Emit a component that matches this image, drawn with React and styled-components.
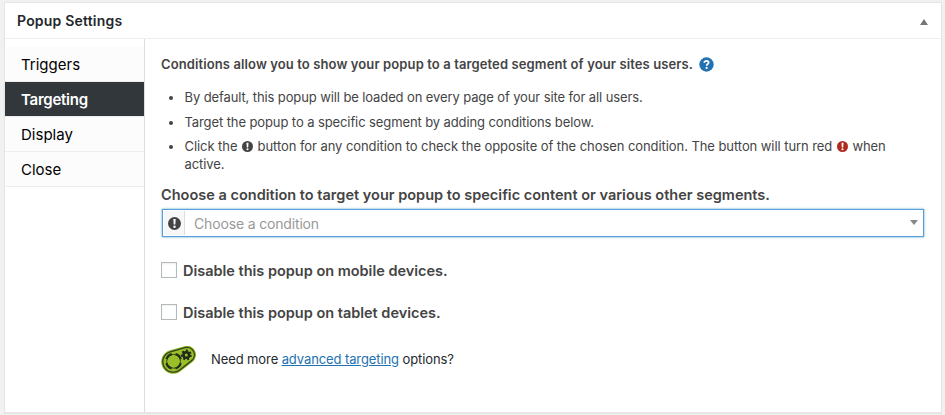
import React from 'react';
import styled, { createGlobalStyle } from 'styled-components';

const GlobalStyle = createGlobalStyle`
  * { box-sizing: border-box; }
  body {
    margin: 0;
    background: #f1f1f1;
    color: #444;
    font: 13px/18px Inter, "Liberation Sans", sans-serif;
  }
`;

const Page = styled.main`
  height: 415px;
  padding: 2px 3px 2px 4px;
  overflow: hidden;
`;

const Panel = styled.section`
  display: flex;
  flex-direction: column;
  height: 411px;
  background: #fff;
  border: 1px solid #e5e5e5;
  box-shadow: 0 1px 1px rgba(0, 0, 0, 0.04);
`;

const PanelHeader = styled.header`
  display: flex;
  flex: none;
  align-items: center;
  justify-content: space-between;
  height: 36px;
  padding: 0 13.5px 0 12px;
  border-bottom: 1px solid #eee;
`;

const PanelTitle = styled.h2`
  margin: 0;
  color: #23282d;
  font-size: 14px;
  font-weight: 600;
  letter-spacing: 0.2px;
`;

const CollapseIcon = styled.svg`
  width: 8px;
  height: 6px;
  margin-top: 3px;
  fill: #72777c;
`;

const PanelBody = styled.div`
  display: flex;
  flex: 1;
  min-height: 0;
`;

const Tabs = styled.nav`
  flex: none;
  width: 140px;
  padding-top: 8px;
  border-right: 1px solid #ddd;
`;

const Tab = styled.div`
  height: 35px;
  padding-left: 16px;
  border-bottom: 1px solid #eee;
  background: ${({ $active }) => ($active ? '#32373c' : '#fcfcfc')};
  background-clip: padding-box;
  color: ${({ $active }) => ($active ? '#fff' : '#000')};
  font-size: 15px;
  font-weight: ${({ $active }) => ($active ? 600 : 400)};
  letter-spacing: ${({ $active }) => ($active ? '-0.25px' : '0')};
  line-height: 35px;
`;

const Content = styled.div`
  flex: 1;
  padding: 16px 17px 0 16px;
`;

const Intro = styled.div`
  display: flex;
  align-items: center;
  height: 18px;
  font-weight: 600;
  letter-spacing: 0.11px;
`;

const HelpIcon = styled.svg`
  width: 15px;
  height: 15px;
  margin: 1px 0 0 6px;
`;

const Notes = styled.ul`
  margin: 15px 0 13px;
  padding: 0;
  list-style: none;
`;

const Note = styled.li`
  position: relative;
  margin-bottom: ${({ $gap }) => $gap || 0}px;
  padding-left: 23.5px;
  letter-spacing: ${({ $tracking }) => $tracking}px;

  &::before {
    content: '';
    position: absolute;
    left: 8px;
    top: 8px;
    width: 4px;
    height: 4px;
    border-radius: 50%;
    background: #444;
  }
`;

const Badge = styled.svg`
  width: ${({ $size }) => $size}px;
  height: ${({ $size }) => $size}px;
  margin: ${({ $inline }) => ($inline ? '0 1px' : '0')};
  vertical-align: -1px;
  color: ${({ $danger }) => ($danger ? '#b02a1e' : '#444')};
`;

const FieldLabel = styled.label`
  display: block;
  height: 18px;
  font-size: 14.5px;
  font-weight: 600;
  letter-spacing: 0.01px;
  white-space: nowrap;
`;

const Select = styled.div`
  display: flex;
  align-items: center;
  height: 28px;
  margin: 5px 0 0 1px;
  padding: 1px 5px 1px 1px;
  border: 1px solid #5b9dd9;
  box-shadow: 0 0 2px rgba(30, 140, 190, 0.8);
`;

const SelectToggle = styled.span`
  display: flex;
  flex: none;
  align-items: center;
  justify-content: center;
  width: 21px;
  height: 24px;
  border-right: 1px solid #ddd;
  background: #f7f7f7;
`;

const Placeholder = styled.span`
  flex: 1;
  padding: 2px 0 0 9px;
  color: #999;
  font-size: 14px;
  letter-spacing: -0.16px;
`;

const Caret = styled.svg`
  width: 8px;
  height: 5px;
  margin-bottom: 1px;
  fill: #888;
`;

const CheckRow = styled.label`
  display: flex;
  align-items: center;
  height: 18px;
  margin-top: 24px;
  font-size: 14.5px;
  font-weight: 600;
  letter-spacing: -0.01px;
`;

const CheckText = styled.span`
  padding-top: 2px;
`;

const Checkbox = styled.span`
  width: 16px;
  height: 16px;
  margin-right: 6px;
  border: 1px solid #b4b9be;
  background: #fff;
  box-shadow: inset 0 1px 2px rgba(0, 0, 0, 0.07);
`;

const Upsell = styled.div`
  display: flex;
  align-items: center;
  height: 28px;
  margin-top: 25px;
  color: #23282d;
  letter-spacing: -0.1px;
`;

const UpsellText = styled.span`
  padding-bottom: 2px;
`;

const Logo = styled.svg`
  width: 35px;
  height: 28px;
  margin-right: 15px;
`;

const Link = styled.a`
  color: #2271b1;
  text-decoration: underline;
`;

function Warning({ danger, inline, size = 11, hole = '#fff' }) {
  return (
    <Badge viewBox="0 0 12 12" $size={size} $danger={danger} $inline={inline}>
      <circle cx="6" cy="6" r="6" fill="currentColor" />
      <path d="M4.9 1.9h2.2l-.3 5.1H5.2z" fill={hole} />
      <circle cx="6" cy="9" r="1.15" fill={hole} />
    </Badge>
  );
}

function GearLogo() {
  return (
    <Logo viewBox="0 0 35 28">
      <path
        d="M8.95 4.24 23.56.13A9 9 0 0 1 31.55 15.88L19.6 25.24A12 12 0 1 1 8.95 4.24Z"
        fill="#8fb325"
      />
      <path
        d="M9.38 5.78 24 1.67A7.4 7.4 0 0 1 30.57 14.62L18.62 23.98A10.4 10.4 0 1 1 9.38 5.78Z"
        fill="#9abf28"
        stroke="#34441c"
        strokeWidth="1.3"
      />
      <circle cx="12.6" cy="15.3" r="6.9" fill="none" stroke="#3c4d1e" strokeWidth="1" />
      <circle
        cx="12.6"
        cy="15.3"
        r="7.4"
        fill="none"
        stroke="#22301c"
        strokeWidth="2.2"
        strokeDasharray="7.6 4.024"
        transform="rotate(-75 12.6 15.3)"
      />
      <circle cx="25.3" cy="9" r="2.8" fill="none" stroke="#1f2b1c" strokeWidth="2.6" />
      <circle
        cx="25.3"
        cy="9"
        r="4.5"
        fill="none"
        stroke="#1f2b1c"
        strokeWidth="1.9"
        strokeDasharray="2 2.039"
      />
    </Logo>
  );
}

const TABS = ['Triggers', 'Targeting', 'Display', 'Close'];

export default function App() {
  return (
    <>
      <GlobalStyle />
      <Page>
        <Panel>
          <PanelHeader>
            <PanelTitle>Popup Settings</PanelTitle>
            <CollapseIcon viewBox="0 0 8 6">
              <path d="M4 0 8 6H0z" />
            </CollapseIcon>
          </PanelHeader>
          <PanelBody>
            <Tabs>
              {TABS.map((name) => (
                <Tab key={name} $active={name === 'Targeting'}>{name}</Tab>
              ))}
            </Tabs>
            <Content>
              <Intro>
                Conditions allow you to show your popup to a targeted segment of your sites users.
                <HelpIcon viewBox="0 0 15 15">
                  <circle cx="7.5" cy="7.5" r="7.2" fill="#2271b1" />
                  <path
                    d="M5.3 5.8C5.4 4.5 6.2 3.8 7.5 3.8s2.2.7 2.2 1.8c0 1.5-2 1.4-2 3.1"
                    fill="none"
                    stroke="#fff"
                    strokeWidth="1.7"
                  />
                  <circle cx="7.6" cy="10.9" r="1.1" fill="#fff" />
                </HelpIcon>
              </Intro>
              <Notes>
                <Note $gap={7} $tracking={-0.11}>
                  By default, this popup will be loaded on every page of your site for all users.
                </Note>
                <Note $gap={6} $tracking={-0.1}>
                  Target the popup to a specific segment by adding conditions below.
                </Note>
                <Note $tracking={-0.07}>
                  Click the <Warning inline /> button for any condition to check the opposite of
                  the chosen condition. The button will turn red <Warning inline danger /> when
                  active.
                </Note>
              </Notes>
              <FieldLabel>
                Choose a condition to target your popup to specific content or various other
                segments.
              </FieldLabel>
              <Select>
                <SelectToggle>
                  <Warning size={13} hole="#f7f7f7" />
                </SelectToggle>
                <Placeholder>Choose a condition</Placeholder>
                <Caret viewBox="0 0 8 5">
                  <path d="M0 0h8L4 5z" />
                </Caret>
              </Select>
              <CheckRow>
                <Checkbox />
                <CheckText>Disable this popup on mobile devices.</CheckText>
              </CheckRow>
              <CheckRow>
                <Checkbox />
                <CheckText>Disable this popup on tablet devices.</CheckText>
              </CheckRow>
              <Upsell>
                <GearLogo />
                <UpsellText>
                  Need more <Link>advanced targeting</Link> options?
                </UpsellText>
              </Upsell>
            </Content>
          </PanelBody>
        </Panel>
      </Page>
    </>
  );
}
